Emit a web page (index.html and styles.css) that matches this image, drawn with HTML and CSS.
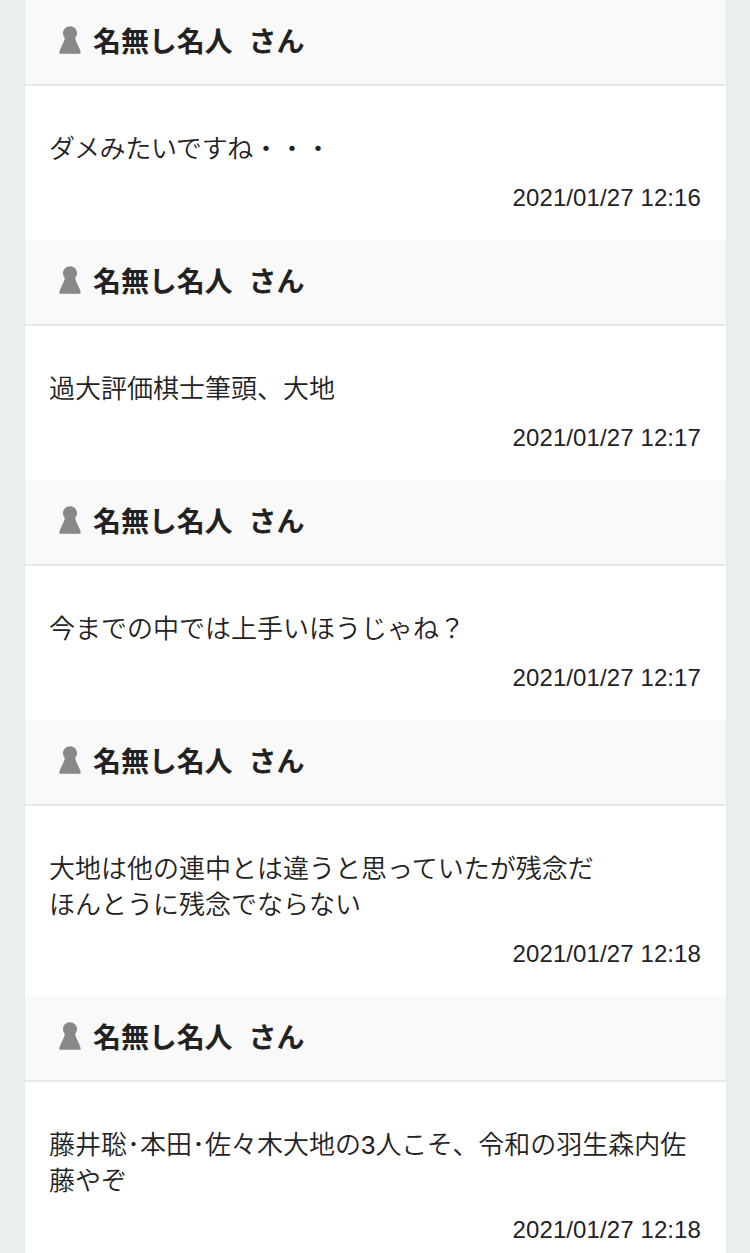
FILE: index.html
```html
<!DOCTYPE html>
<html lang="ja">
<head>
<meta charset="utf-8">
<title>コメント</title>
<link rel="stylesheet" href="styles.css">
</head>
<body>
<svg width="0" height="0" class="defs"><symbol id="pawn" viewBox="0 0 22 28"><path d="M11 0.200C7 0.200 4 3.200 4 7c0 1.900.700 3.700 1.900 5C4.900 17 1.300 21.500 0.300 26.300 0.200 27.200 0.300 27.700 1.100 27.700h19.800c.8 0 .9-.5.8-1.400C20.700 21.500 17.100 17 16.100 12 17.300 10.700 18 8.900 18 7 18 3.200 15 0.200 11 0.200z"/></symbol></svg>
<main class="comments">
<article class="comment">
<header class="head"><svg class="icon"><use href="#pawn"/></svg><span class="name">名無し名人</span><span class="name">さん</span></header>
<div class="body"><p class="text"><span class="tight">ダメみたいですね</span>・・・</p><time class="date">2021/01/27 12:16</time></div>
</article>
<article class="comment">
<header class="head"><svg class="icon"><use href="#pawn"/></svg><span class="name">名無し名人</span><span class="name">さん</span></header>
<div class="body"><p class="text">過大評価棋士筆頭、大地</p><time class="date">2021/01/27 12:17</time></div>
</article>
<article class="comment">
<header class="head"><svg class="icon"><use href="#pawn"/></svg><span class="name">名無し名人</span><span class="name">さん</span></header>
<div class="body"><p class="text">今までの中では上手いほうじゃね？</p><time class="date">2021/01/27 12:17</time></div>
</article>
<article class="comment">
<header class="head"><svg class="icon"><use href="#pawn"/></svg><span class="name">名無し名人</span><span class="name">さん</span></header>
<div class="body"><p class="text">大地は他の連中とは違うと思っていたが残念だ<br>ほんとうに残念でならない</p><time class="date">2021/01/27 12:18</time></div>
</article>
<article class="comment">
<header class="head"><svg class="icon"><use href="#pawn"/></svg><span class="name">名無し名人</span><span class="name">さん</span></header>
<div class="body"><p class="text">藤井聡･本田･佐々木大地の3<span class="tight">人こそ、</span>令和の羽生森内佐藤やぞ</p><time class="date">2021/01/27 12:18</time></div>
</article>
</main>
</body>
</html>
```
FILE: styles.css
```css
* { box-sizing: border-box; }
html { height: 100%; overflow: hidden; }
body {
  margin: 0;
  height: 1253px;
  overflow: hidden;
  background: repeating-linear-gradient(90deg, #e9eeef 0 8px, #ebf0f1 8px 16px);
  color: #222;
  font-family: "Liberation Sans", "Noto Sans CJK JP", sans-serif;
}
.defs { display: block; }
.comments {
  width: 703px;
  min-height: 1253px;
  margin-left: 24px;
  background: #fff;
  border: solid #e6e9ea;
  border-width: 0 1px;
}
.head {
  display: flex;
  align-items: center;
  height: 86px;
  padding: 2px 0 0 34px;
  background: #f9f9f9;
  border-bottom: 2px solid #e8e8e8;
}
.icon {
  width: 22px;
  height: 28px;
  margin: 0 12px 7px 0;
  fill: #888;
}
.name {
  margin-right: 16px;
  font-size: 28px;
  font-weight: 700;
  line-height: 40px;
  letter-spacing: -0.1px;
}
.body {
  display: flex;
  flex-direction: column;
  padding: 45px 25px 24px 24px;
}
.text {
  margin: 0 -4px 0 0;
  font-size: 26px;
  font-weight: 350;
  line-height: 36px;
}
.tight { letter-spacing: -0.3px; }
.date {
  align-self: flex-end;
  margin-top: 13px;
  font-size: 24px;
  line-height: 36px;
  letter-spacing: 0.1px;
}
```
